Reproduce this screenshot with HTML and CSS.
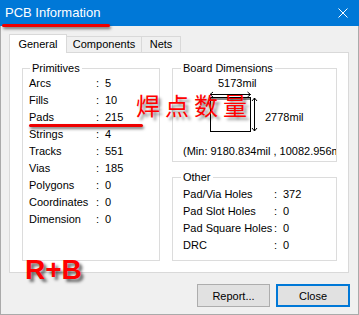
FILE: index.html
```html
<!DOCTYPE html>
<html lang="en">
<head>
<meta charset="utf-8">
<title>PCB Information</title>
<link rel="stylesheet" href="styles.css">
</head>
<body>
<div class="window">
  <div class="titlebar">
    <span class="title">PCB Information</span>
    <svg class="close-x" width="10" height="10" viewBox="0 0 10 10"><path d="M0.5 0.5 L9.5 9.5 M9.5 0.5 L0.5 9.5" stroke="#fff" stroke-width="1"/></svg>
  </div>
  <div class="client">
    <div class="tabs">
      <div class="tab tab-general active">General</div>
      <div class="tab tab-components">Components</div>
      <div class="tab tab-nets">Nets</div>
    </div>
    <div class="panel">
      <fieldset class="group prim">
        <legend>Primitives</legend>
        <div class="kv kv-prim">
          <span>Arcs</span><span>:</span><span>5</span>
          <span>Fills</span><span>:</span><span>10</span>
          <span>Pads</span><span>:</span><span>215</span>
          <span>Strings</span><span>:</span><span>4</span>
          <span>Tracks</span><span>:</span><span>551</span>
          <span>Vias</span><span>:</span><span>185</span>
          <span>Polygons</span><span>:</span><span>0</span>
          <span>Coordinates</span><span>:</span><span>0</span>
          <span>Dimension</span><span>:</span><span>0</span>
        </div>
      </fieldset>
      <div class="right-col">
        <fieldset class="group dims">
          <legend>Board Dimensions</legend>
          <div class="dim-top">5173mil</div>
          <div class="dim-mid">
            <svg class="board" width="52" height="44" viewBox="0 0 52 44">
              <g stroke="#000" stroke-width="1" fill="none">
                <path d="M4 4.5 H44.5 M41.5 2 L44.5 4.5 L41.5 7 M7 2 L4 4.5 L7 7"/>
                <rect x="4.5" y="7.5" width="40" height="34"/>
                <path d="M48.5 8 V41 M46 11 L48.5 8 L51 11 M46 38 L48.5 41 L51 38"/>
              </g>
              <rect x="5" y="8" width="39" height="2" fill="#8c8c8c"/>
            </svg>
            <span class="dim-h">2778mil</span>
          </div>
          <div class="dim-min">(Min: 9180.834mil , 10082.956mil)</div>
        </fieldset>
        <fieldset class="group other">
          <legend>Other</legend>
          <div class="kv kv-other">
            <span>Pad/Via Holes</span><span>:</span><span>372</span>
            <span>Pad Slot Holes</span><span>:</span><span>0</span>
            <span>Pad Square Holes</span><span>:</span><span>0</span>
            <span>DRC</span><span>:</span><span>0</span>
          </div>
        </fieldset>
      </div>
    </div>
    <div class="buttons">
      <button class="btn btn-report">Report...</button>
      <button class="btn btn-close default">Close</button>
    </div>
  </div>

  <div class="mark mark-title"></div>
  <div class="mark mark-pads"></div>
  <div class="note-cn">焊点数量</div>
  <div class="note-rb">R+B</div>
</div>
</body>
</html>
```
FILE: styles.css
```css
* { box-sizing: border-box; }
html, body { margin: 0; padding: 0; }
body {
  width: 359px;
  height: 315px;
  overflow: hidden;
  background: #f0f0f0;
  font-family: "Liberation Sans", Arial, sans-serif;
  font-size: 11px;
  color: #000;
}
.window {
  position: relative;
  width: 359px;
  height: 315px;
  background: #f0f0f0;
}
.titlebar {
  height: 26px;
  background: #0078d7;
  color: #fff;
  display: flex;
  align-items: center;
  justify-content: space-between;
  padding: 0 11px 0 5px;
}
.title { font-size: 13px; line-height: 16px; }
.close-x { display: block; }

.client {
  height: 289px;
  border: 1px solid #aaaaaa;
  border-top: 0;
  padding: 8px 0 0 8px;
}

/* tabs */
.tabs { display: flex; height: 18px; align-items: flex-start; }
.tab {
  height: 16px;
  margin-top: 2px;
  border: 1px solid #d9d9d9;
  border-bottom: 0;
  background: #f0f0f0;
  text-align: center;
  line-height: 15px;
}
.tab + .tab { margin-left: -1px; }
.tab.active {
  position: relative;
  z-index: 1;
  height: 19px;
  margin-top: 0;
  background: #fff;
  line-height: 18px;
}
.tab-general { width: 58px; }
.tab-components { width: 76px; }
.tab-nets { width: 40px; }

/* panel */
.panel {
  width: 340px;
  height: 221px;
  border: 1px solid #d9d9d9;
  background: #fff;
  display: flex;
  gap: 12px;
  padding: 9px 11px 0 12px;
}
.group {
  margin: 0;
  border: 1px solid #dcdcdc;
  min-width: 0;
}
.group legend {
  padding: 0 2px;
  line-height: 13px;
}
.prim {
  width: 138px;
  height: 199px;
  padding: 0 0 0 6px;
}
.prim legend { margin-left: 1px; }
.right-col {
  width: 165px;
  display: flex;
  flex-direction: column;
  gap: 9px;
}
.dims {
  height: 100px;
  padding: 0 0 0 10px;
  overflow: hidden;
}
.dims legend, .other legend { margin-left: -2px; }
.other {
  height: 90px;
  padding: 0 0 0 10px;
}

.kv { display: grid; line-height: 17px; white-space: nowrap; }
.kv-prim { grid-template-columns: 67px 9px auto; }
.kv-other { grid-template-columns: 91px 9px auto; margin-top: 2px; }

.dim-top { line-height: 14px; padding-left: 35px; margin-top: 1px; }
.dim-mid { display: flex; align-items: flex-start; padding-left: 23px; }
.board { display: block; }
.dim-h { line-height: 14px; margin-top: 20px; margin-left: 7px; }
.dim-min { line-height: 14px; margin-top: 10px; white-space: nowrap; }

/* buttons */
.buttons {
  width: 341px;
  display: flex;
  justify-content: flex-end;
  gap: 6px;
  margin-top: 11px;
}
.btn {
  height: 23px;
  margin: 0;
  padding: 0;
  font-family: inherit;
  font-size: 11px;
  color: #000;
  background: #e1e1e1;
  border: 1px solid #adadad;
}
.btn-report { width: 73px; }
.btn-close { width: 74px; }
.btn.default { border: 2px solid #0078d7; }

/* annotations overlaid on the screenshot */
.mark {
  position: absolute;
  height: 3px;
  background: #ee0000;
  border-radius: 2px;
  box-shadow: 1px 2px 3px rgba(0, 0, 0, 0.55);
}
.mark-title { left: 2px; top: 24px; width: 108px; }
.mark-pads { left: 29px; top: 124px; width: 114px; }
.note-cn {
  position: absolute;
  left: 136px;
  top: 93px;
  font-family: "Noto Sans CJK SC", sans-serif;
  font-size: 24px;
  line-height: 24px;
  letter-spacing: 5px;
  color: #ff0000;
  text-shadow: 3px 3px 3px rgba(0, 0, 0, 0.45);
}
.note-rb {
  position: absolute;
  left: 25px;
  top: 256px;
  font-family: "Liberation Sans", Arial, sans-serif;
  font-weight: bold;
  font-size: 28px;
  line-height: 28px;
  color: #ff0000;
  text-shadow: 3px 3px 3px rgba(0, 0, 0, 0.55);
}
```
